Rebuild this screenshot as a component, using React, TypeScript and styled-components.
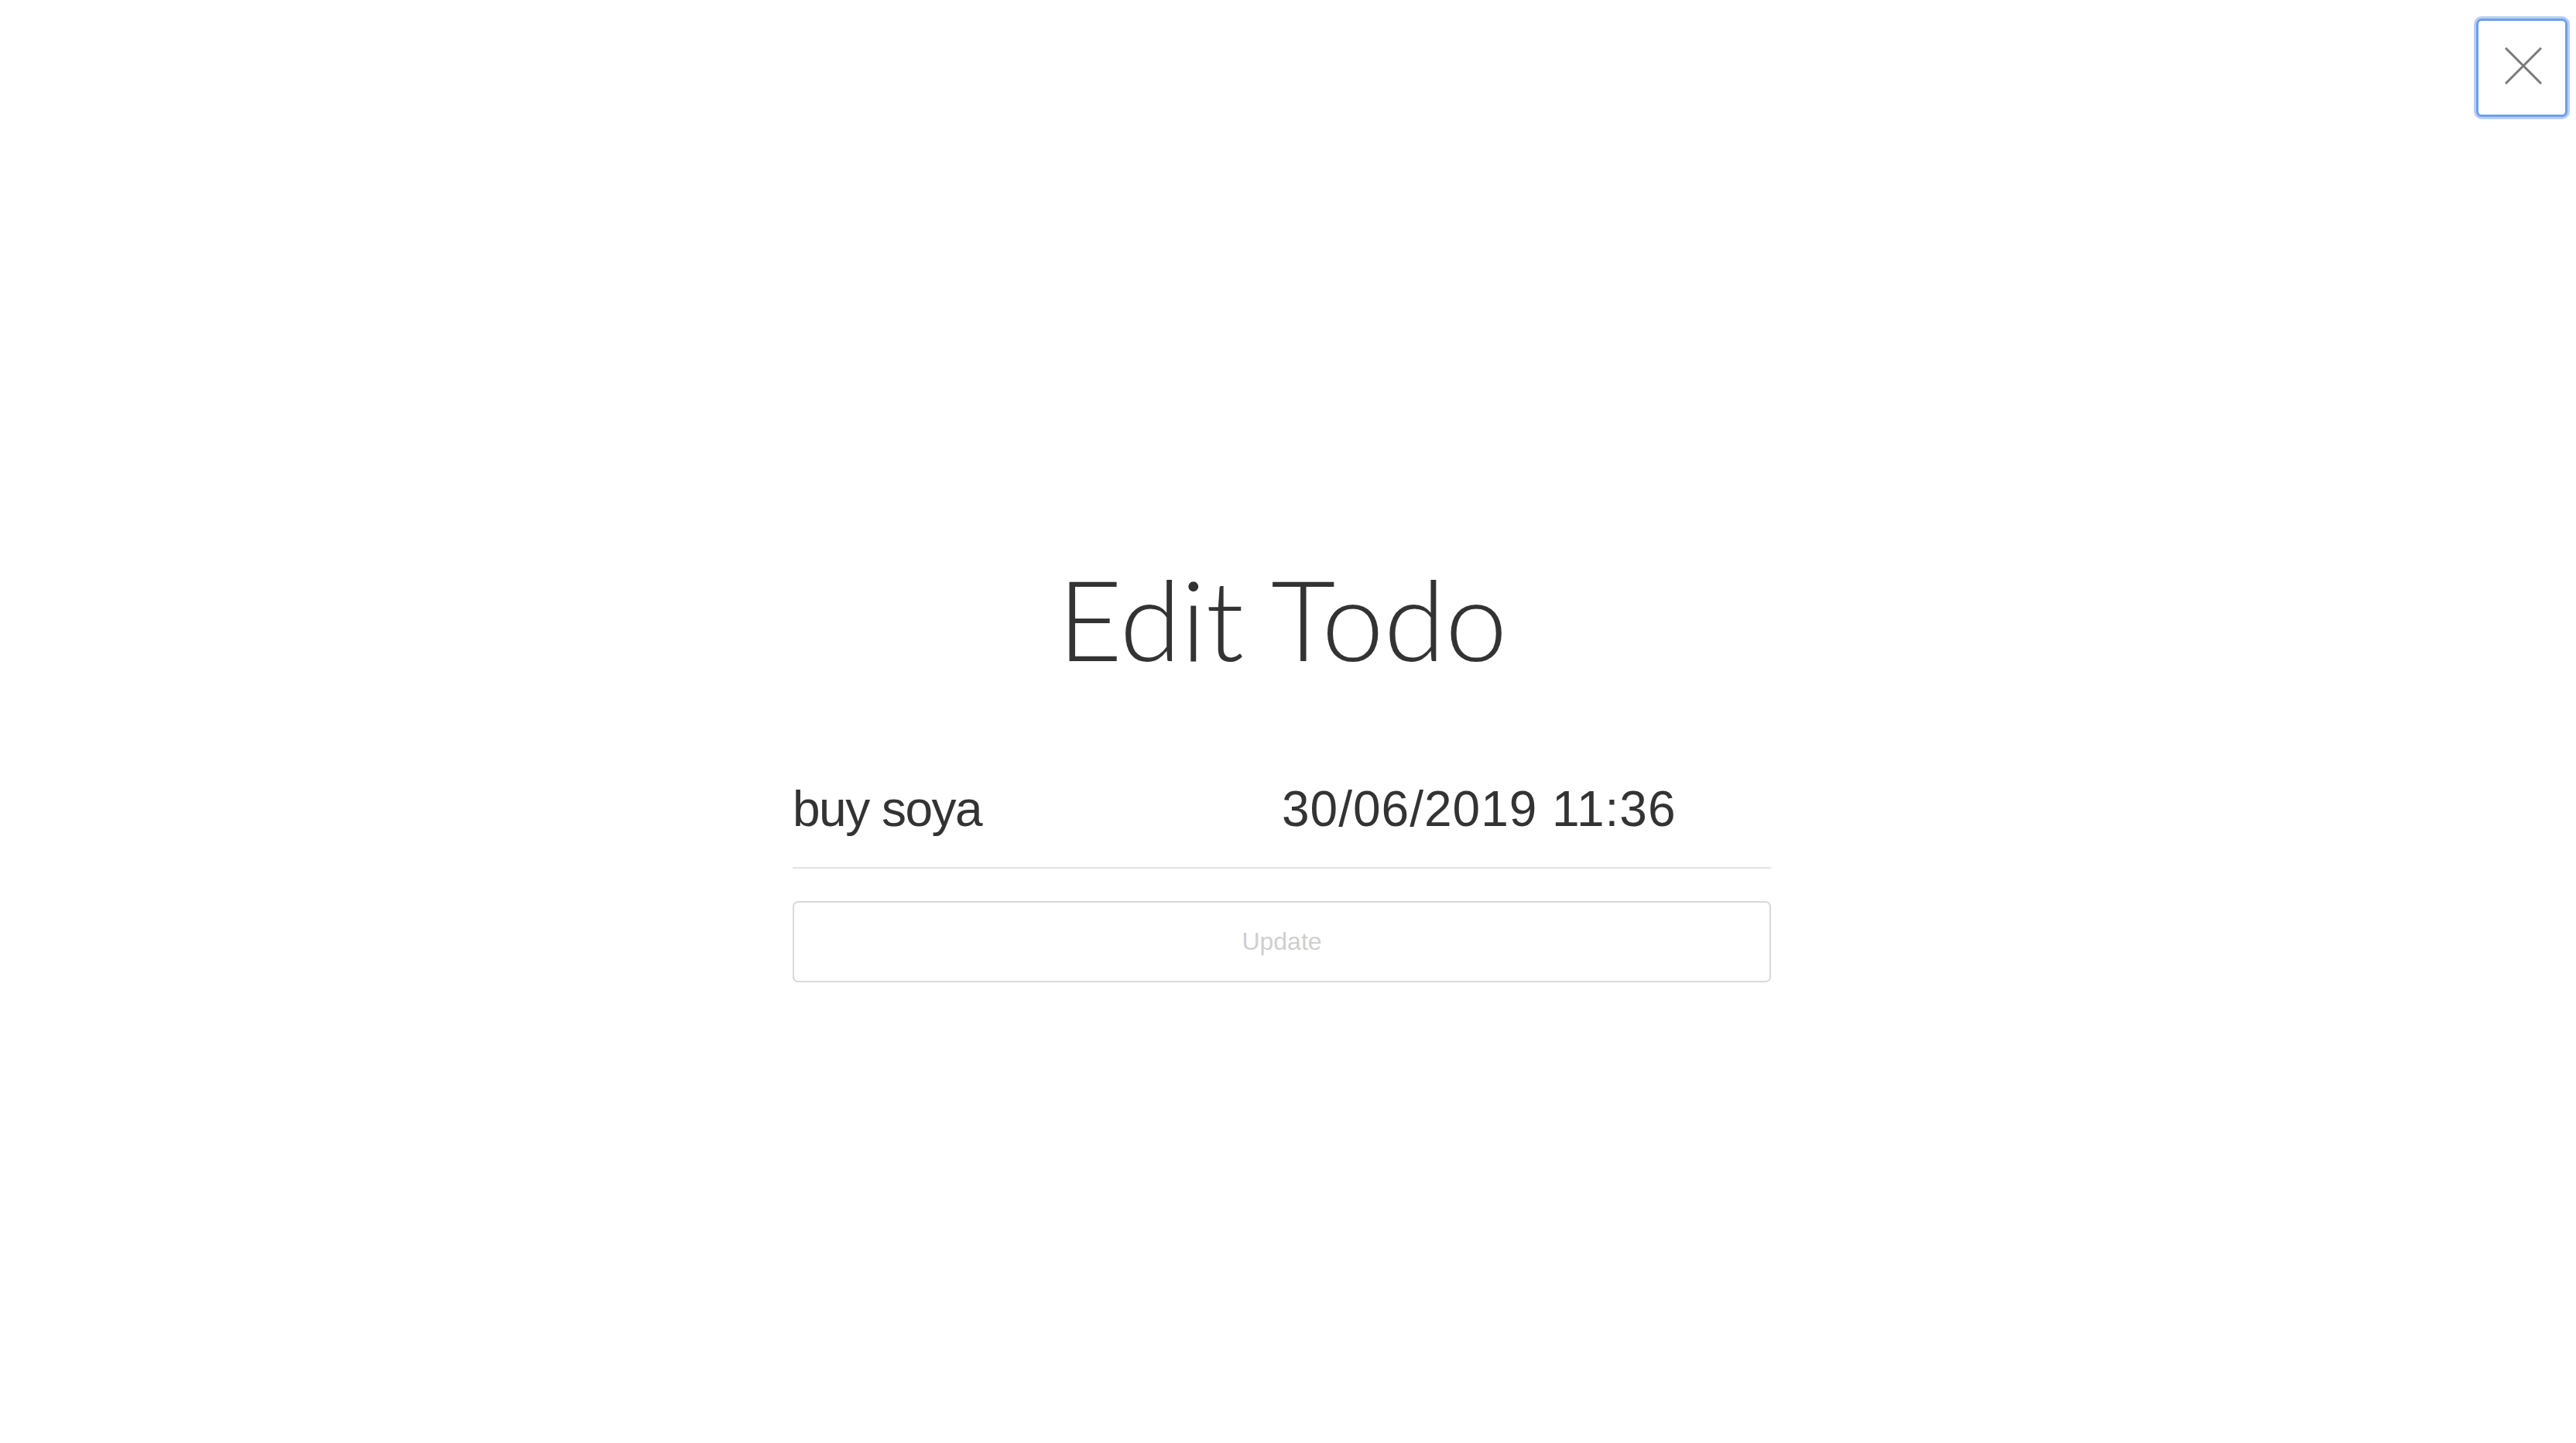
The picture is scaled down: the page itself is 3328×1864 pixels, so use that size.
import React from "react";
import styled, { createGlobalStyle } from "styled-components";

const GlobalStyle = createGlobalStyle`
  html, body {
    margin: 0;
    padding: 0;
    background: #ffffff;
  }
  body {
    font-family: "Liberation Sans", Arial, sans-serif;
    color: #333333;
  }
  * { box-sizing: border-box; }
`;

const Overlay = styled.div`
  min-height: 100vh;
  display: flex;
  flex-direction: column;
  background: #ffffff;
`;

const TopBar = styled.div`
  display: flex;
  justify-content: flex-end;
  padding: 24px 11px 0 0;
`;

const CloseButton = styled.button`
  width: 118px;
  height: 127px;
  display: flex;
  align-items: center;
  justify-content: center;
  padding: 0 0 6px 4px;
  background: #ffffff;
  border: 3px solid #6c9df3;
  border-radius: 7px;
  box-shadow: 0 0 0 3px rgba(125, 168, 246, 0.55);
  cursor: pointer;
  outline: none;
`;

const Body = styled.main`
  display: flex;
  justify-content: center;
  padding: 562px 16px 0 0;
`;

const Form = styled.form`
  width: 1264px;
  display: flex;
  flex-direction: column;
`;

const Title = styled.h1`
  margin: 0 0 122px;
  font-family: Lato, "Open Sans", sans-serif;
  font-weight: 300;
  font-size: 144px;
  line-height: 1.2;
  text-align: center;
  color: #333333;
  padding-left: 2px;
`;

const FieldRow = styled.div`
  display: grid;
  grid-template-columns: 1fr 1fr;
  padding-bottom: 38px;
  border-bottom: 2px solid #e3e3e3;
`;

const Field = styled.input<{ $tracking?: number }>`
  width: 100%;
  border: none;
  outline: none;
  padding: 0;
  margin: 0;
  background: transparent;
  font-family: "Liberation Sans", Arial, sans-serif;
  font-size: 64px;
  line-height: 74px;
  height: 74px;
  letter-spacing: ${(p) => p.$tracking ?? 0}px;
  color: #333333;
`;

const SubmitButton = styled.button`
  margin-top: 42px;
  height: 105px;
  width: 100%;
  display: flex;
  align-items: center;
  justify-content: center;
  background: #ffffff;
  border: 2px solid #d9d9d9;
  border-radius: 7px;
  font-family: "Liberation Sans", Arial, sans-serif;
  font-size: 32px;
  color: #cfcfcf;
  cursor: default;
`;

const CloseIcon = () => (
  <svg width="48" height="48" viewBox="0 0 48 48" fill="none">
    <path
      d="M1 1 L47 47 M47 1 L1 47"
      stroke="#7a7a7a"
      strokeWidth="3"
      strokeLinecap="butt"
    />
  </svg>
);

export default function App() {
  return (
    <>
      <GlobalStyle />
      <Overlay>
        <TopBar>
          <CloseButton aria-label="Close">
            <CloseIcon />
          </CloseButton>
        </TopBar>
        <Body>
          <Form onSubmit={(e) => e.preventDefault()}>
            <Title>Edit Todo</Title>
            <FieldRow>
              <Field type="text" defaultValue="buy soya" $tracking={-1.5} />
              <Field type="text" defaultValue="30/06/2019 11:36" $tracking={1} />
            </FieldRow>
            <SubmitButton type="submit" disabled>
              Update
            </SubmitButton>
          </Form>
        </Body>
      </Overlay>
    </>
  );
}
